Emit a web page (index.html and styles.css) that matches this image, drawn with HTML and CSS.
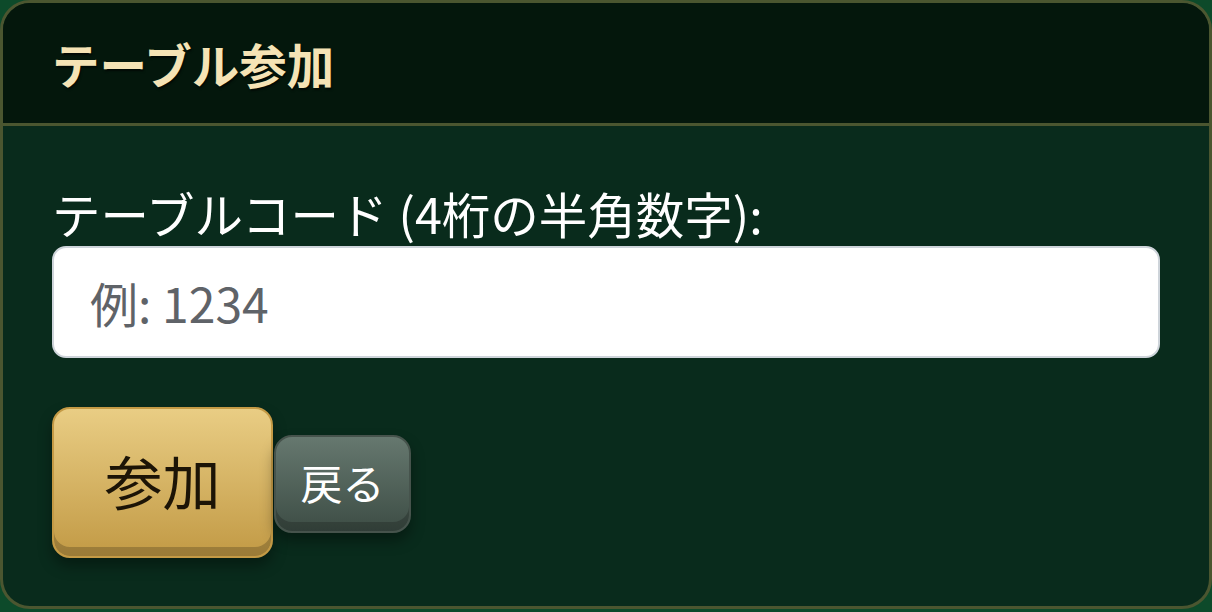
FILE: index.html
```html
<!DOCTYPE html>
<html lang="ja">
<head>
    <meta charset="UTF-8">
    <meta name="viewport" content="width=device-width, initial-scale=1.0">
    <title>テーブル参加</title>
    <link rel="stylesheet" href="styles.css">
</head>
<body>
    <div class="modal-content">
        <div class="modal-header">
            <h2 class="modal-title">テーブル参加</h2>
        </div>
        <div class="modal-body">
            <label class="form-label" for="table-code">テーブルコード (4桁の半角数字):</label>
            <input class="form-control" id="table-code" type="text" maxlength="4" placeholder="例: 1234">
            <div class="actions">
                <button class="btn btn-gold">参加</button>
                <button class="btn btn-gray">戻る</button>
            </div>
        </div>
    </div>
</body>
</html>
```

FILE: styles.css
```css
body {
    margin: 0;
    background: #0d4a2a;
    font-family: 'Noto Sans CJK JP', 'Noto Sans', sans-serif;
}

.modal-content {
    height: 603px;
    border: 3px solid #4b5630;
    border-radius: 30px;
    background: #092b1c;
    overflow: hidden;
}

.modal-header {
    height: 120px;
    display: flex;
    align-items: center;
    padding: 0 49px;
    background: #04170c;
    border-bottom: 3px solid #4b5630;
}

.modal-title {
    margin: 0;
    font-size: 47.5px;
    font-weight: 700;
    color: #f5e3b5;
    text-shadow: 1px 2px 2px rgba(0, 0, 0, 0.6);
}

.modal-body {
    padding: 60px 49px 0;
}

.form-label {
    display: block;
    font-size: 48.5px;
    line-height: 1.15;
    color: #fff;
    margin-bottom: 4px;
}

.form-control {
    display: block;
    box-sizing: border-box;
    width: 100%;
    height: 112px;
    padding: 0 36px;
    border: 2px solid #ced4da;
    border-radius: 14px;
    background: #fff;
    font-family: inherit;
    font-size: 48px;
    color: #222;
}

.form-control::placeholder {
    color: #5f6368;
}

.actions {
    display: flex;
    align-items: center;
    gap: 1px;
    margin-top: 49px;
}

.btn {
    font-family: inherit;
    cursor: pointer;
    box-shadow: inset 0 -9px 0 rgba(0, 0, 0, 0.2), 0 8px 14px rgba(0, 0, 0, 0.35);
}

.btn-gold {
    width: 221px;
    height: 151px;
    padding-bottom: 6px;
    font-size: 58px;
    color: #1c1406;
    background: linear-gradient(#e9cd84, #c29a45);
    border: 2px solid #c49a45;
    border-radius: 18px;
}

.btn-gray {
    width: 137px;
    height: 98px;
    padding: 0 0 6px;
    font-size: 42px;
    color: #fff;
    background: linear-gradient(#66786f, #3d4d45);
    border: 2px solid #46534c;
    border-radius: 18px;
    margin-top: 4px;
}
```
